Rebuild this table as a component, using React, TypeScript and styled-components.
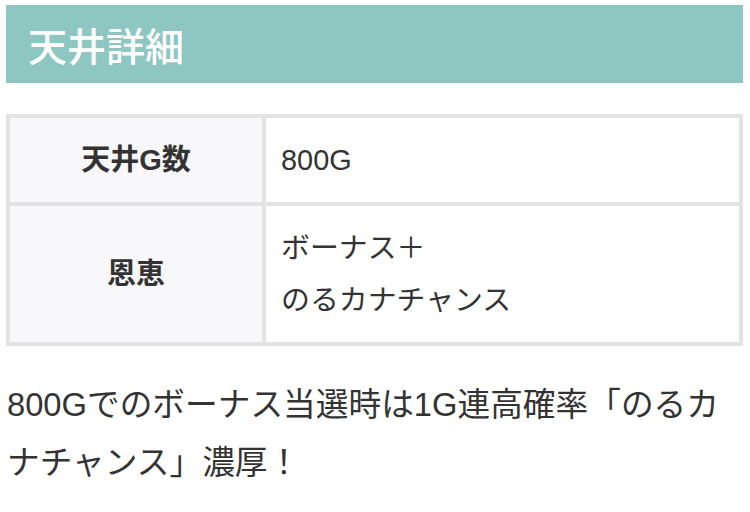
import React from "react";
import styled, { createGlobalStyle } from "styled-components";

const Global = createGlobalStyle`
  html, body { margin: 0; padding: 0; background: #fff; }
  body {
    font-family: "Liberation Sans", "Noto Sans CJK JP", "Noto Sans", sans-serif;
    color: #333;
  }
`;

const Page = styled.div`
  padding: 5px 7px 0 6px;
`;

const Heading = styled.h2`
  margin: 0;
  height: 78px;
  display: flex;
  align-items: center;
  padding-left: 22px;
  background: #8ec6c2;
  color: #fff;
  font-family: "Noto Sans CJK JP", sans-serif;
  font-size: 39px;
  font-weight: 500;
`;

const Table = styled.table`
  margin-top: 31px;
  width: 100%;
  border-collapse: collapse;
  border: 4px solid #e3e3e3;
`;

const Th = styled.th`
  width: 252px;
  background: #f8f8fa;
  border: 4px solid #e3e3e3;
  font-size: 29px;
  font-weight: 700;
  text-align: center;
  line-height: 52px;
  padding: 16px 0;
`;

const Td = styled.td`
  border: 4px solid #e3e3e3;
  font-size: 28.9px;
  line-height: 52px;
  padding: 16px 15px;
  background: #fff;
`;

const Note = styled.p`
  margin: 30px 0 0 1px;
  font-size: 32.7px;
  line-height: 58px;
`;

export default function App() {
  return (
    <>
      <Global />
      <Page>
        <Heading>天井詳細</Heading>
        <Table>
          <tbody>
            <tr>
              <Th>天井G数</Th>
              <Td>800G</Td>
            </tr>
            <tr>
              <Th>恩恵</Th>
              <Td>
                ボーナス＋
                <br />
                のるカナチャンス
              </Td>
            </tr>
          </tbody>
        </Table>
        <Note>800Gでのボーナス当選時は1G連高確率「のるカナチャンス」濃厚！</Note>
      </Page>
    </>
  );
}
